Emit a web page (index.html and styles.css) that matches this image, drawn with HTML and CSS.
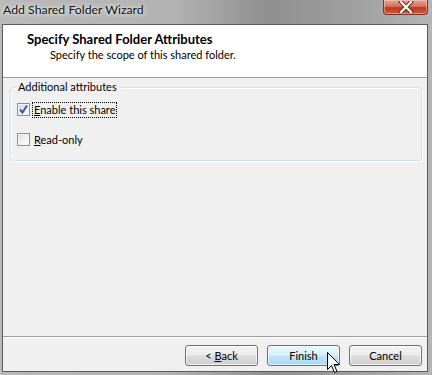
FILE: index.html
```html
<!DOCTYPE html>
<html>
<head>
<meta charset="utf-8">
<link rel="stylesheet" href="styles.css">
</head>
<body>
<div class="window">
  <div class="titlebar">
    <span class="title">Add Shared Folder Wizard</span>
    <div class="close">
      <svg width="16" height="12" viewBox="0 0 16 12"><path d="M3 1 L13 11 M13 1 L3 11" stroke="#5a2a20" stroke-width="4" stroke-linecap="square"/><path d="M3 1 L13 11 M13 1 L3 11" stroke="#fff" stroke-width="2.2" stroke-linecap="square"/></svg>
    </div>
  </div>
  <div class="client">
    <div class="header">
      <div class="h-title">Specify Shared Folder Attributes</div>
      <div class="h-sub">Specify the scope of this shared folder.</div>
    </div>
    <div class="body">
      <fieldset class="group">
        <legend>Additional attributes</legend>
        <div class="rows">
          <div class="row">
            <span class="cb checked"><svg width="11" height="11" viewBox="0 0 11 11"><path d="M2 5.5 L4.5 8.5 L9 1.5" fill="none" stroke="#3d5a9c" stroke-width="2"/></svg></span>
            <span class="lbl focus"><u>E</u>nable this share</span>
          </div>
          <div class="row">
            <span class="cb"></span>
            <span class="lbl"><u>R</u>ead-only</span>
          </div>
        </div>
      </fieldset>
    </div>
    <div class="footer">
      <button class="btn">&lt; <u>B</u>ack</button>
      <button class="btn hot">Finish</button>
      <button class="btn">Cancel</button>
    </div>
  </div>
  <svg class="cursor" width="14" height="22" viewBox="0 0 14 22"><path d="M0.5 0.5 L0.5 17.5 L4.5 13.5 L7.5 20.5 L10 19.5 L7 12.5 L12.5 12.5 Z" fill="#fff" stroke="#000" stroke-width="1"/></svg>
</div>
</body>
</html>
```

FILE: styles.css
```css
* { box-sizing: border-box; }
html, body { margin: 0; padding: 0; }
body {
  width: 432px;
  height: 375px;
  overflow: hidden;
  font-family: Lato, "Liberation Sans", sans-serif;
  font-size: 11px;
  color: #000;
}
.window {
  position: relative;
  width: 432px;
  height: 375px;
  display: flex;
  flex-direction: column;
  background: linear-gradient(90deg, #b9b9b9 0%, #b2b2b2 40%, #a0a0a0 52%, #8f8f8f 62%, #9a9a9a 75%, #a6a6a6 88%, #b5b5b5 100%);
}
.titlebar {
  height: 24px;
  display: flex;
  align-items: flex-start;
  justify-content: space-between;
  position: relative;
}
.title {
  font-family: Lato, "Liberation Sans", sans-serif;
  font-size: 12.3px;
  line-height: 20px;
  padding-left: 3px;
  color: #111;
  text-shadow: 0 0 6px rgba(255,255,255,0.9), 0 0 3px rgba(255,255,255,0.8);
}
.close {
  width: 45px;
  height: 15px;
  margin-right: 4px;
  border: 1px solid #6d3a30;
  border-top: none;
  border-radius: 0 0 4px 4px;
  background: linear-gradient(180deg, #e8a494 0%, #d8735c 45%, #c0391f 55%, #c95a3c 100%);
  box-shadow: inset 0 0 0 1px rgba(255,210,200,0.5);
  display: flex;
  align-items: center;
  justify-content: center;
}
.client {
  flex: 1;
  margin: 0 4px 3px 2px;
  border: 1px solid #5c5c5c;
  background: #f0f0f0;
  display: flex;
  flex-direction: column;
}
.header {
  height: 53px;
  background: #fff;
  border-bottom: 1px solid #a0a0a0;
  padding: 6px 0 0 24px;
}
.h-title {
  font-weight: bold;
  font-size: 13px;
  line-height: 16px;
}
.h-sub {
  line-height: 15px;
  padding-left: 23px;
}
.body {
  flex: 1;
  padding: 2px 5px 0 7px;
}
.group {
  margin: 0;
  padding: 0 0 0 5px;
  border: 1px solid #d5dfe5;
  border-radius: 3px;
  box-shadow: inset 1px 1px 0 #fff, 1px 1px 0 #fff;
  height: 81px;
}
.group legend {
  padding: 0 2px;
  line-height: 14px;
}
.rows {
  display: flex;
  flex-direction: column;
  gap: 15px;
  padding: 8px 0 0 1px;
}
.row {
  display: flex;
  align-items: center;
  gap: 2px;
  height: 15px;
}
.cb {
  width: 13px;
  height: 13px;
  border: 1px solid #8e8f8f;
  background: linear-gradient(135deg, #dcdcdc 0%, #f4f4f4 60%, #fff 100%);
  box-shadow: inset 0 0 0 1px #f4f4f4;
  display: flex;
  align-items: center;
  justify-content: center;
}
.cb.checked {
  background: linear-gradient(135deg, #c8d3e6 0%, #eef2f9 70%, #fff 100%);
}
.lbl {
  line-height: 14px;
  padding: 0 1px;
  border: 1px solid transparent;
}
.lbl.focus {
  border: 1px dotted #000;
}
.footer {
  height: 35px;
  border-top: 1px solid #a0a0a0;
  box-shadow: inset 0 1px 0 #fff;
  display: flex;
  justify-content: flex-end;
  align-items: flex-start;
  gap: 9px;
  padding: 8px 5px 0 0;
}
.btn {
  width: 73px;
  height: 21px;
  padding: 0;
  font-family: Lato, "Liberation Sans", sans-serif;
  font-size: 11px;
  color: #000;
  border: 1px solid #707070;
  border-radius: 3px;
  background: linear-gradient(180deg, #f2f2f2 0%, #ebebeb 48%, #dddddd 52%, #cfcfcf 100%);
  box-shadow: inset 0 0 0 1px rgba(255,255,255,0.7);
}
.btn.hot {
  border-color: #3c7fb1;
  background: linear-gradient(180deg, #eaf6fd 0%, #d9f0fc 48%, #bee6fd 52%, #a7d9f5 100%);
}
.cursor {
  position: absolute;
  left: 327px;
  top: 352px;
}
```
